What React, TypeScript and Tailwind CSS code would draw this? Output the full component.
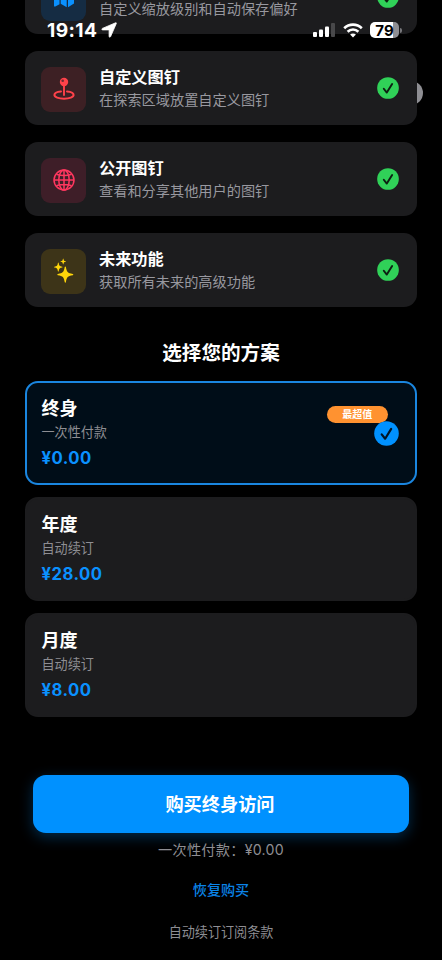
import { useState } from "react"

const features = [
  { id: "map", title: "", desc: "自定义缩放级别和自动保存偏好", box: "bg-[#152c43]" },
  { id: "pin", title: "自定义图钉", desc: "在探索区域放置自定义图钉", box: "bg-[#3d2024]" },
  { id: "globe", title: "公开图钉", desc: "查看和分享其他用户的图钉", box: "bg-[#3e1e28]" },
  { id: "sparkles", title: "未来功能", desc: "获取所有未来的高级功能", box: "bg-[#3d3418]" },
]

const plans = [
  { id: "lifetime", name: "终身", note: "一次性付款", price: "¥0.00", badge: "最超值" },
  { id: "yearly", name: "年度", note: "自动续订", price: "¥28.00" },
  { id: "monthly", name: "月度", note: "自动续订", price: "¥8.00" },
]

function FeatureIcon({ id }: { id: string }) {
  switch (id) {
    case "map":
      return (
        <svg width="22" height="20" viewBox="0 0 22 20" fill="#0a91ff">
          <path d="M1 4.2 6.5 1v15.2L2.3 18.6Q1 19 1 17.6zM7.7 1l6 3v15.2l-6-3.4zM15 4l4.6-2.6Q21 1 21 2.4v13.2L15 19.2z" />
        </svg>
      )
    case "pin":
      return (
        <svg width="24" height="26" viewBox="0 0 24 26" fill="none" stroke="#ff424a">
          <circle cx="12" cy="6" r="4.2" fill="#ff424a" stroke="none" />
          <circle cx="10.7" cy="4.7" r="1.3" fill="#6b2a30" stroke="none" />
          <path d="M12 9v10" strokeWidth="1.9" strokeLinecap="round" />
          <path
            d="M9 15.4C5 15.7 2.4 17.2 2.4 19c0 2.1 4.1 3.7 9.6 3.7s9.6-1.6 9.6-3.7c0-1.8-2.6-3.300-6.6-3.6"
            strokeWidth="2"
            strokeLinecap="round"
          />
        </svg>
      )
    case "globe":
      return (
        <svg width="24" height="24" viewBox="0 0 24 24" fill="none" stroke="#ff375f" strokeWidth="1.5">
          <circle cx="12" cy="12" r="10" />
          <ellipse cx="12" cy="12" rx="5.2" ry="10" />
          <path d="M12 2v20M2 12h20M4.5 6.2c4 1.7 11 1.7 15 0M4.5 17.8c4-1.7 11-1.7 15 0" />
        </svg>
      )
    default:
      return (
        <svg width="24" height="26" viewBox="0 0 24 26" fill="#ffd60a">
          <path d="M13.3 8.5q.5 0 .6.6c.8 5 1.8 6.1 6.8 6.9q.6.1.6.6t-.6.6c-5 .8-6 1.8-6.8 6.9q-.1.6-.6.6t-.6-.6c-.8-5.1-1.8-6.1-6.8-6.9q-.6-.1-.6-.6t.6-.6c5-.8 6-1.9 6.8-6.9q.1-.6.6-.6z" />
          <path d="M6.3 4.6q.3 0 .4.4c.4 2.8 1 3.3 3.5 3.7q.4.1.4.4t-.4.4c-2.5.4-3.1 1-3.5 3.7q-.1.4-.4.4t-.4-.4c-.4-2.7-1-3.3-3.5-3.7Q2 9.4 2 9.1t.4-.4c2.5-.4 3.1-.9 3.5-3.7q.1-.4.4-.4z" />
          <path d="M11.2.6q.2 0 .3.3c.3 1.7.6 2.1 2.2 2.3q.3.1.3.3t-.3.3c-1.6.2-1.9.6-2.2 2.2q-.1.3-.3.3t-.3-.3c-.3-1.6-.6-2-2.2-2.2q-.3-.1-.3-.3t.3-.3c1.6-.2 1.9-.6 2.2-2.3q.1-.3.3-.3z" />
        </svg>
      )
  }
}

function CheckCircle({ size, fill, mark }: { size: number; fill: string; mark: string }) {
  return (
    <svg width={size} height={size} viewBox="0 0 24 24" fill="none" className="shrink-0">
      <circle cx="12" cy="12" r="11.8" fill={fill} />
      <path
        d="m7.4 12.8 3.3 4.2 5.8-9.4"
        stroke={mark}
        strokeWidth="2.1"
        strokeLinecap="round"
        strokeLinejoin="round"
      />
    </svg>
  )
}

function StatusBar() {
  return (
    <div className="absolute inset-x-0 top-[19px] z-20 flex h-[22px] items-center justify-between pr-[40px] pl-[47px] text-white">
      <div className="flex items-center gap-[4px]">
        <span className="text-[19.2px] leading-[22px] font-bold tracking-[0.4px]">19:14</span>
        <svg width="16" height="16" viewBox="0 0 16 16" fill="#fff" stroke="#fff" strokeWidth="0.8" strokeLinejoin="round">
          <path d="M14.6.8C15.2.5 15.600.9 15.300 1.500L9.600 14.600c-.4.9-1.500.7-1.500-.3V8.400q0-.5-.5-.5H1.700c-1 0-1.200-1.100-.3-1.500z" />
        </svg>
      </div>
      <div className="flex items-center">
        <svg width="24" height="16" viewBox="0 0 24 16" fill="#fff">
          <rect x="1" y="10" width="4" height="5" rx="1" />
          <rect x="7" y="7.5" width="4" height="7.5" rx="1" />
          <rect x="13" y="4.5" width="4" height="10.5" rx="1" />
          <rect x="19" y="1" width="4" height="14" rx="1" fill="#48484a" />
        </svg>
        <svg className="ml-[7px]" width="20" height="15" viewBox="0 0 20 15" fill="none" stroke="#fff" strokeWidth="2.6">
          <path d="M1.2 5.2c4.9-4.8 12.7-4.8 17.6 0" />
          <path d="M4.6 8.7c3-2.9 7.8-2.9 10.8 0" />
          <path d="m10 14.500-2.900-3c1.600-1.500 4.200-1.500 5.800 0z" fill="#fff" stroke="none" />
        </svg>
        <div className="ml-[7px] flex h-[16px] w-[29px] items-center justify-center rounded-[5px] bg-[linear-gradient(to_right,#fff_79%,#8e8e93_79%)] text-[15px] leading-none font-bold text-black">
          79
        </div>
        <div className="ml-px h-[5px] w-[2px] rounded-r-full bg-[#77777b]" />
      </div>
    </div>
  )
}

export default function App() {
  const [selected, setSelected] = useState("lifetime")

  return (
    <div className="relative h-[960px] w-[442px] overflow-hidden bg-black font-['Inter','Noto_Sans_CJK_SC',sans-serif] text-white">
      <StatusBar />

      {/* 关闭按钮，被功能卡片遮住 */}
      <div className="absolute top-[81px] left-[399px] h-6 w-6 rounded-full bg-[#8e8e93]" />

      {/* 功能列表 */}
      <div className="relative -mt-[40.5px] flex flex-col gap-[16.5px] px-[25px]">
        {features.map((f) => (
          <div key={f.id} className="flex h-[74.5px] items-center rounded-[13px] bg-[#1c1c1e] pr-[18px] pl-4">
            <div className={`mt-[3px] flex h-[45px] w-[45px] items-center justify-center rounded-[9px] ${f.box}`}>
              <FeatureIcon id={f.id} />
            </div>
            <div className="mt-[2px] ml-[13px] flex-1">
              <h3 className="h-[23px] text-[16.2px] leading-[23px] font-bold">{f.title}</h3>
              <p className="text-[14.2px] leading-[22px] text-[#98989f]">{f.desc}</p>
            </div>
            <CheckCircle size={22} fill="#30d158" mark="#0d2012" />
          </div>
        ))}
      </div>

      <h2 className="mt-[32px] text-center text-[19.6px] leading-[28px] font-bold">选择您的方案</h2>

      {/* 订阅方案 */}
      <div className="mt-[14px] flex flex-col gap-[12.5px] px-[25px]">
        {plans.map((p) => (
          <button
            key={p.id}
            type="button"
            onClick={() => setSelected(p.id)}
            className={`relative flex h-[103.5px] flex-col items-start rounded-[13px] border-2 px-[14.5px] pt-[13px] text-left ${
              selected === p.id ? "border-[#1a86e0] bg-[#000d18]" : "border-[#1c1c1e] bg-[#1c1c1e]"
            }`}
          >
            <span className="text-[18px] leading-[26px] font-bold">{p.name}</span>
            <span className="text-[13.1px] leading-[20px] text-[#8e8e93]">{p.note}</span>
            <span className="mt-[4px] text-[16.7px] leading-[24px] font-bold tracking-[0.45px] text-[#0a91ff]">
              {p.price}
            </span>
            {p.badge && (
              <span className="absolute top-[22.5px] right-[27px] flex h-[17px] w-[61.5px] items-center justify-center rounded-full bg-[#ff9230] text-[10px] font-bold">
                {p.badge}
              </span>
            )}
            {selected === p.id && (
              <span className="absolute top-[38px] right-4">
                <CheckCircle size={25} fill="#0091ff" mark="#001426" />
              </span>
            )}
          </button>
        ))}
      </div>

      {/* 购买 */}
      <div className="mt-[58.5px] flex flex-col items-center px-[33px]">
        <button
          type="button"
          className="h-[57.5px] w-full rounded-[13px] bg-[#0091ff] pt-px pr-[2px] text-[18.2px] font-bold shadow-[0_4px_14px_rgba(0,145,255,0.3)]"
        >
          购买终身访问
        </button>
        <p className="mt-[6.5px] text-[14.2px] leading-[22px] tracking-[0.25px] text-[#8e8e93]">一次性付款：¥0.00</p>
        <button type="button" className="mt-[18px] text-[14.1px] leading-[22px] font-medium text-[#0a84e8]">
          恢复购买
        </button>
        <p className="mt-[21px] text-[13.1px] leading-[20px] text-[#8e8e93]">自动续订订阅条款</p>
      </div>
    </div>
  )
}
